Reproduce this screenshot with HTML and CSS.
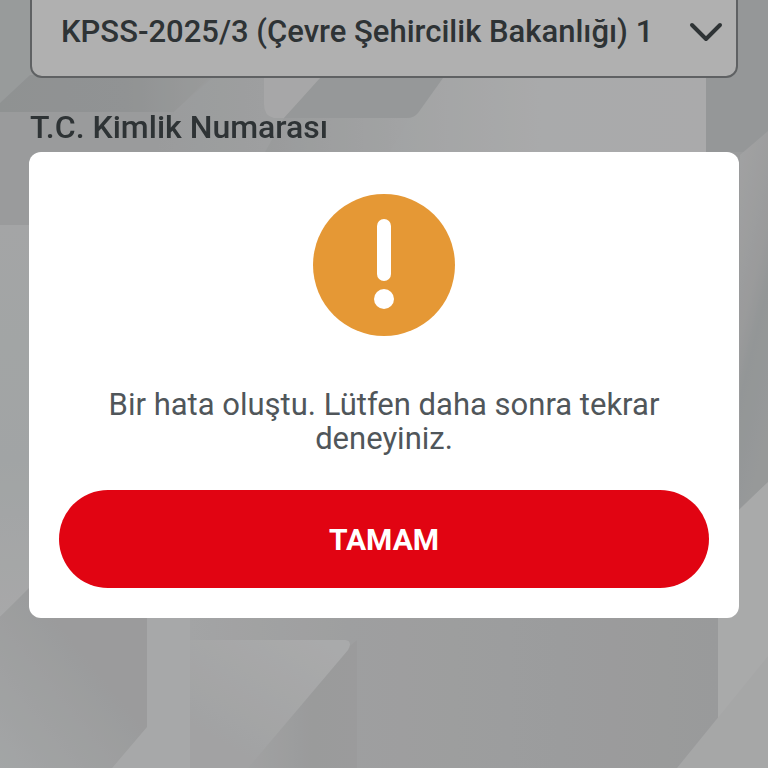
FILE: index.html
```html
<!DOCTYPE html>
<html lang="tr">
  <head>
    <meta charset="UTF-8" />
    <meta name="viewport" content="width=device-width, initial-scale=1.0" />
    <title>Başvuru</title>
    <link rel="stylesheet" href="styles.css" />
  </head>
  <body>
    <svg class="background" viewBox="0 0 768 768" preserveAspectRatio="xMidYMid slice" aria-hidden="true">
      <defs>
        <linearGradient id="band" x1="0" x2="1">
          <stop offset="0" stop-color="#cdd1d2" />
          <stop offset="0.6" stop-color="#d0d3d4" />
          <stop offset="1" stop-color="#dcdede" />
        </linearGradient>
        <linearGradient id="upper" x1="0" x2="1">
          <stop offset="0" stop-color="#dddfe0" />
          <stop offset="0.4" stop-color="#e7e9ea" />
          <stop offset="0.7" stop-color="#f3f4f5" />
          <stop offset="1" stop-color="#f4f4f5" />
        </linearGradient>
        <linearGradient id="fold" x1="0" x2="1">
          <stop offset="0" stop-color="#dcdedf" />
          <stop offset="1" stop-color="#e9ebec" />
        </linearGradient>
        <linearGradient id="left" x1="0" x2="0" y1="0" y2="1">
          <stop offset="0" stop-color="#ebedee" />
          <stop offset="0.6" stop-color="#e7ebec" />
          <stop offset="1" stop-color="#f0f1f2" />
        </linearGradient>
        <linearGradient id="right" x1="0" x2="0.3" y1="0" y2="1">
          <stop offset="0" stop-color="#e8e9ea" />
          <stop offset="0.5" stop-color="#dddedf" />
          <stop offset="0.65" stop-color="#d3d7d8" />
          <stop offset="1" stop-color="#d8dbdc" />
        </linearGradient>
        <linearGradient id="corner" x1="0" x2="0.6" y1="1" y2="0.4">
          <stop offset="0" stop-color="#eaedee" />
          <stop offset="1" stop-color="#dedfe0" />
        </linearGradient>
        <linearGradient id="lower" x1="0" x2="1">
          <stop offset="0" stop-color="#eaebec" />
          <stop offset="0.3" stop-color="#e3e4e5" />
          <stop offset="1" stop-color="#dcddde" />
        </linearGradient>
        <linearGradient id="shade" x1="0" x2="1">
          <stop offset="0" stop-color="#e7e8e9" />
          <stop offset="0.6" stop-color="#dddedf" />
          <stop offset="1" stop-color="#dedfe0" />
        </linearGradient>
        <linearGradient id="flap" x1="0.2" x2="0.8" y1="0.8" y2="0">
          <stop offset="0" stop-color="#e8e9ea" />
          <stop offset="1" stop-color="#f3f4f5" />
        </linearGradient>
      </defs>
      <rect width="768" height="768" fill="#dddfe0" />
      <path d="M0 0H30V75L0 103Z" fill="#dadedf" />
      <path d="M30 75H212L174 112H0V103Z" fill="url(#band)" />
      <path d="M212 78H706V152H155L174 112Z" fill="url(#upper)" />
      <path d="M264 78H322L284 118H274Q264 116 264 104Z" fill="#f0f0f1" />
      <path d="M320 78H443L418 113Q414 118 407 118H284Z" fill="#d7dadb" />
      <path d="M284 118H410L390 152H265Z" fill="url(#fold)" />
      <path d="M706 0H768V152H706Z" fill="#d6d9da" />
      <path d="M0 225H60V560L0 617Z" fill="url(#left)" />
      <path d="M768 131L740 155V508L768 482Z" fill="url(#right)" />
      <path d="M768 482L718 530V768H768Z" fill="#f3f4f4" />
      <path d="M0 617L30 587H147V727L112 768H0Z" fill="url(#corner)" />
      <path d="M147 610H192V768H112L147 727Z" fill="#f0f1f2" />
      <path d="M190 610H718V720L677 768H190Z" fill="url(#lower)" />
      <path d="M345 650L357 640V768H246Z" fill="url(#shade)" />
      <path d="M190 640H345Q353 641 348 650L248 768H190Z" fill="url(#flap)" />
      <path d="M768 656L677 768H768Z" fill="#eeeff0" />
    </svg>

    <main>
      <div class="select-box">
        <select class="exam" aria-label="Sınav">
          <option>KPSS-2025/3 (Çevre Şehircilik Bakanlığı) 1</option>
        </select>
        <svg class="arrow" viewBox="0 0 34 20" aria-hidden="true">
          <path d="M3 3L17 17L31 3" />
        </svg>
      </div>
      <label class="field-label" for="tc">T.C. Kimlik Numarası</label>
      <input class="field" id="tc" type="text" inputmode="numeric" />
    </main>

    <div class="overlay">
      <section class="modal" role="alertdialog" aria-modal="true" aria-describedby="message">
        <svg class="warning" viewBox="0 0 142 142" aria-hidden="true">
          <circle cx="71" cy="71" r="71" fill="#e59835" />
          <rect x="64" y="25" width="14" height="62" rx="7" fill="#fff" />
          <circle cx="71" cy="105" r="10" fill="#fff" />
        </svg>
        <p class="message" id="message">Bir hata oluştu. Lütfen daha sonra tekrar deneyiniz.</p>
        <button class="confirm" type="button">TAMAM</button>
      </section>
    </div>
  </body>
</html>
```

FILE: styles.css
```css
* {
  box-sizing: border-box;
}

body {
  margin: 0;
  min-height: 100vh;
  overflow: hidden;
  background-color: #dddfe0;
  color: #434a4d;
  font-family: Roboto, "Noto Sans", sans-serif;
  font-size: 31px;
}

.background {
  position: fixed;
  inset: 0;
  z-index: -1;
  width: 100%;
  height: 100%;
}

main {
  display: flex;
  flex-direction: column;
  margin-top: -14px;
  padding: 0 30px;
}

.select-box {
  display: grid;
  align-items: center;
}

.exam,
.arrow {
  grid-area: 1 / 1;
}

.exam {
  appearance: none;
  width: 100%;
  height: 92px;
  padding: 0 60px 2px 29px;
  border: 2px solid #888c8e;
  border-radius: 12px;
  background-color: #fdfdfd;
  color: inherit;
  font-family: inherit;
  font-size: 31px;
  font-weight: 500;
}

.arrow {
  justify-self: end;
  width: 34px;
  margin-right: 15px;
  fill: none;
  stroke: #434a4d;
  stroke-width: 4;
  stroke-linecap: round;
  stroke-linejoin: round;
  pointer-events: none;
}

.field-label {
  margin: 30px 0 12px;
  font-size: 32px;
  font-weight: 500;
  line-height: 38px;
}

.field {
  height: 92px;
  padding: 0 30px;
  border: 2px solid #888c8e;
  border-radius: 12px;
  background-color: #fdfdfd;
  font: inherit;
}

.overlay {
  position: fixed;
  inset: 0;
  display: flex;
  align-items: center;
  padding: 2px 29px 0;
  background-color: rgba(0, 0, 0, 0.3);
}

.modal {
  display: flex;
  flex: 1;
  flex-direction: column;
  align-items: center;
  padding: 42px 30px 30px;
  border-radius: 12px;
  background-color: #fff;
}

.warning {
  width: 142px;
  height: 142px;
}

.message {
  margin: 52px 0 34px;
  padding: 0 40px;
  color: #50565a;
  font-weight: 400;
  line-height: 34px;
  text-align: center;
}

.confirm {
  width: 100%;
  height: 98px;
  border: none;
  border-radius: 49px;
  background-color: #e10412;
  color: #fff;
  font-family: inherit;
  font-size: 30px;
  font-weight: 700;
  cursor: pointer;
}
```
